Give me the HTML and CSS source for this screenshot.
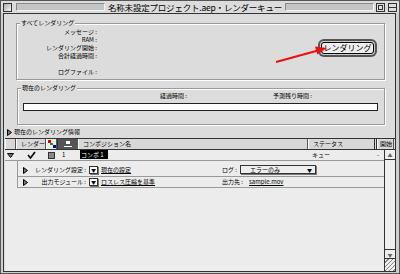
FILE: index.html
```html
<!DOCTYPE html>
<html lang="ja">

<head>
    <meta charset="UTF-8">
    <title>レンダーキュー</title>
    <link rel="stylesheet" href="styles.css">
</head>

<body>
    <div class="window">
        <!-- タイトルバー -->
        <div class="titlebar">
            <span class="wbox close-box"></span>
            <span class="stripes"></span>
            <span class="title">名称未設定プロジェクト.aep・レンダーキュー</span>
            <span class="stripes"></span>
            <span class="wbox zoom-box"></span>
            <span class="wbox collapse-box"></span>
        </div>

        <div class="frame">
            <div class="content">
                <!-- すべてレンダリング -->
                <fieldset class="group group-all">
                    <legend>すべてレンダリング</legend>
                    <div class="all-body">
                        <div class="info-labels">
                            <div>メッセージ :</div>
                            <div>RAM :</div>
                            <div>レンダリング開始 :</div>
                            <div>合計経過時間 :</div>
                            <div>&nbsp;</div>
                            <div>ログファイル :</div>
                        </div>
                        <button class="render-btn">レンダリング</button>
                    </div>
                </fieldset>

                <!-- 現在のレンダリング -->
                <fieldset class="group group-current">
                    <legend>現在のレンダリング</legend>
                    <div class="times">
                        <span class="elapsed">経過時間 :</span><span class="remain">予測残り時間 :</span>
                    </div>
                    <div class="progress"></div>
                </fieldset>

                <div class="disclosure">
                    <svg class="tri" width="5" height="7" viewBox="0 0 5 7"><polygon points="0.5,0.5 4.5,3.5 0.5,6.5" fill="#777" stroke="#000" stroke-width="1"/></svg>
                    <span>現在のレンダリング情報</span>
                </div>

                <!-- キュー -->
                <div class="queue">
                    <div class="queue-head">
                        <div class="hcell"></div>
                        <div class="hcell">レンダー</div>
                        <div class="hcell icon-cell">
                            <svg width="8" height="8" viewBox="0 0 8 8">
                                <rect x="0" y="0" width="3" height="3" fill="#d00"/>
                                <rect x="2" y="3" width="3" height="2" fill="#0a0"/>
                                <rect x="5" y="5" width="3" height="3" fill="#00c"/>
                            </svg>
                        </div>
                        <div class="hcell dark-cell">
                            <svg width="10" height="7" viewBox="0 0 10 7">
                                <rect x="3" y="0" width="4" height="3" fill="#fff"/>
                                <rect x="1" y="5" width="8" height="1" fill="#fff"/>
                            </svg>
                        </div>
                        <div class="hcell">コンポジション名</div>
                        <div class="hcell status-cell">ステータス</div>
                        <div class="hcell start-cell">開始</div>
                    </div>

                    <div class="queue-body">
                        <div class="rows">
                            <div class="item-row">
                                <div class="c-tri">
                                    <svg width="7" height="5" viewBox="0 0 7 5"><polygon points="0.5,0.5 6.5,0.5 3.5,4.5" fill="#777" stroke="#000" stroke-width="1"/></svg>
                                </div>
                                <div class="c-check">
                                    <svg width="9" height="8" viewBox="0 0 9 8"><path d="M1 4 L3.5 7 L8 1" fill="none" stroke="#000" stroke-width="1.6"/></svg>
                                </div>
                                <div class="c-label"><span class="label-sq"></span></div>
                                <div class="c-num">1</div>
                                <div class="c-name"><span class="selected">コンポ 1</span></div>
                                <div class="c-status">キュー</div>
                                <div class="c-end">-</div>
                            </div>

                            <div class="sub">
                                <div class="sub-row sub-tall">
                                    <div class="sub-left">
                                        <svg class="tri" width="5" height="7" viewBox="0 0 5 7"><polygon points="0.5,0.5 4.5,3.5 0.5,6.5" fill="#777" stroke="#000" stroke-width="1"/></svg>
                                        <span class="sub-label">レンダリング設定 :</span>
                                        <span class="pop-sq">▼</span>
                                        <span class="link">現在の設定</span>
                                    </div>
                                    <div class="sub-right">
                                        <span>ログ :</span>
                                        <span class="popup"><span>エラーのみ</span><span class="pop-arrow">▼</span></span>
                                    </div>
                                </div>
                                <div class="sub-row">
                                    <div class="sub-left">
                                        <svg class="tri" width="5" height="7" viewBox="0 0 5 7"><polygon points="0.5,0.5 4.5,3.5 0.5,6.5" fill="#777" stroke="#000" stroke-width="1"/></svg>
                                        <span class="sub-label">出力モジュール :</span>
                                        <span class="pop-sq">▼</span>
                                        <span class="link">ロスレス圧縮を基準</span>
                                    </div>
                                    <div class="sub-right">
                                        <span>出力先 :</span>
                                        <span class="link latin">sample.mov</span>
                                    </div>
                                </div>
                            </div>
                        </div>

                        <div class="scrollbar">
                            <div class="sb-btn">▲</div>
                            <div class="sb-track"></div>
                            <div class="sb-btn sb-down">▼</div>
                            <div class="grip"></div>
                        </div>
                    </div>
                </div>
            </div>
        </div>

        <!-- 注釈の矢印 -->
        <svg class="arrow" width="60" height="25" viewBox="0 0 60 25">
            <line x1="6" y1="20" x2="47" y2="8.7" stroke="#e81010" stroke-width="2"/>
            <polygon points="57,6 47.3,12.6 45,4.6" fill="#e81010"/>
        </svg>
    </div>
</body>

</html>
```

FILE: styles.css
```css
/* 全体 */
html,
body {
    margin: 0;
    height: 100%;
}

body {
    background: #999;
    font-family: "Noto Sans CJK JP", "Noto Sans", sans-serif;
    font-size: 6px;
    line-height: 8px;
    color: #000;
}

.window {
    position: relative;
    width: 400px;
    height: 274px;
    box-sizing: border-box;
    border: 1px solid #555;
    background: #cecece;
    display: flex;
    flex-direction: column;
}

/* タイトルバー */
.titlebar {
    height: 12px;
    display: flex;
    align-items: center;
    padding: 0 2px;
    background: #dcdcdc;
}

.wbox {
    width: 9px;
    height: 9px;
    box-sizing: border-box;
    border: 1px solid #333;
    background: linear-gradient(135deg, #aaa, #f4f4f4);
    position: relative;
}

.zoom-box {
    margin-left: 2px;
    background: #ddd;
}

.zoom-box::after {
    content: "";
    position: absolute;
    left: 1px;
    top: 1px;
    width: 3px;
    height: 3px;
    border: 1px solid #333;
}

.collapse-box {
    margin-left: 3px;
    background: #ddd;
}

.collapse-box::after {
    content: "";
    position: absolute;
    left: 0;
    right: 0;
    top: 2px;
    height: 1px;
    border-bottom: 1px solid #333;
}

.stripes {
    flex: 1;
    height: 8px;
    box-sizing: border-box;
    border-top: 1px solid #888;
    border-left: 1px solid #888;
    border-bottom: 1px solid #f4f4f4;
    border-right: 1px solid #f4f4f4;
    background: #c4c4c4;
}

.titlebar .stripes:nth-child(2) {
    margin-left: 4px;
}

.title {
    font-size: 8.5px;
    letter-spacing: -0.2px;
    line-height: 10px;
    margin: 0 3px;
}

/* ウィンドウ枠 */
.frame {
    flex: 1;
    display: flex;
    padding: 0 4px 1px 2px;
    min-height: 0;
}

.content {
    flex: 1;
    display: flex;
    flex-direction: column;
    border: 1px solid #333;
    background: #dcdcdc;
    min-height: 0;
}

/* グループボックス */
.group {
    border: 1px solid #999;
    box-shadow: 1px 1px 0 #fff, inset 1px 1px 0 #fff;
    padding: 0;
    min-width: 0;
}

.group legend {
    padding: 0 1px;
    margin-left: 3px;
    line-height: 8px;
    background: #dcdcdc;
}

.group-all {
    margin: 5px 10px 0 12px;
    padding: 1px 0 3px 0;
}

.all-body {
    display: flex;
    align-items: flex-start;
}

.info-labels {
    width: 80px;
    text-align: right;
}

.render-btn {
    margin: 14px 10px 0 auto;
    width: 53px;
    height: 12px;
    padding: 0;
    border: 1px solid #000;
    border-radius: 3px;
    background: #eee;
    box-shadow: 0 0 0 1px #c8c8c8, 0 0 0 3px #555;
    font-family: inherit;
    font-size: 8px;
    line-height: 10px;
    color: #000;
}

.group-current {
    margin: 4px 10px 0 13px;
    padding: 0 0 13px 0;
}

.times {
    display: flex;
}

.elapsed {
    width: 169px;
    text-align: right;
}

.remain {
    width: 125px;
    text-align: right;
}

.progress {
    margin: 3px 6px 0 5px;
    height: 8px;
    box-sizing: border-box;
    border: 1px solid #222;
    background: #fff;
}

/* 詳細の開閉 */
.disclosure {
    margin-top: 3px;
    padding-left: 3px;
    display: flex;
    align-items: center;
    gap: 2px;
    height: 8px;
}

.tri {
    display: block;
    flex: none;
}

/* レンダーキュー */
.queue {
    margin: 2px 0 0 1px;
    flex: 1;
    display: flex;
    flex-direction: column;
    min-height: 0;
}

.queue-head {
    height: 12px;
    box-sizing: border-box;
    border-top: 1px solid #333;
    border-bottom: 1px solid #333;
    display: grid;
    grid-template-columns: 11px 30px 11px 21px 230px 69px 17px;
}

.hcell {
    box-sizing: border-box;
    border-left: 1px solid #fff;
    border-right: 1px solid #555;
    background: #d8d8d8;
    padding-left: 4px;
    line-height: 10px;
    white-space: nowrap;
    overflow: hidden;
}

.start-cell {
    padding-left: 2px;
}

.icon-cell,
.dark-cell {
    padding: 0;
    display: flex;
    align-items: center;
    justify-content: center;
}

.icon-cell {
    background: #eee;
}

.dark-cell {
    background: #555;
    border-left-color: #333;
}

.status-cell {
    border-right: 3px double #333;
}

.queue-body {
    flex: 1;
    display: flex;
    background: #ececec;
    min-height: 0;
}

.rows {
    flex: 1;
}

.item-row {
    height: 11px;
    box-sizing: border-box;
    border-bottom: 1px solid #999;
    display: grid;
    grid-template-columns: 11px 30px 11px 21px 230px 69px 7px;
    align-items: center;
}

.c-tri,
.c-check,
.c-label {
    display: flex;
    justify-content: center;
    align-items: center;
}

.c-check svg,
.c-tri svg {
    display: block;
}

.label-sq {
    width: 7px;
    height: 7px;
    box-sizing: border-box;
    border: 1px solid #333;
    background: #888;
}

.c-num {
    padding-left: 5px;
}

.c-name {
    padding-left: 2px;
}

.selected {
    background: #000;
    color: #fff;
    padding: 0 4px 0 1px;
}

.c-status {
    padding-left: 4px;
}

.c-end {
    font-size: 6px;
}

/* 設定行 */
.sub {
    margin-left: 12px;
    border-left: 1px solid #999;
}

.sub-row {
    height: 11px;
    box-sizing: border-box;
    border-bottom: 1px solid #999;
    display: grid;
    grid-template-columns: 204px 1fr;
    align-items: center;
}

.sub-tall {
    height: 16px;
    align-items: end;
    padding-bottom: 2px;
}

.sub-left,
.sub-right {
    display: flex;
    align-items: center;
}

.sub-left .tri {
    margin-left: 5px;
}

.sub-label {
    width: 58px;
    text-align: right;
}

.pop-sq {
    margin-left: 3px;
    width: 9px;
    height: 8px;
    box-sizing: border-box;
    border: 1px solid #333;
    box-shadow: 1px 1px 0 #777;
    background: #fff;
    font-size: 5px;
    line-height: 6px;
    text-align: center;
}

.link {
    margin-left: 3px;
    text-decoration: underline;
}

.sub-right {
    gap: 3px;
}

.popup {
    width: 76px;
    height: 9px;
    box-sizing: border-box;
    border: 1px solid #333;
    box-shadow: 1px 1px 0 #777;
    background: #eee;
    display: flex;
    justify-content: space-between;
    align-items: center;
    padding: 0 3px 0 9px;
}

.pop-arrow {
    font-size: 5px;
}

/* スクロールバー */
.scrollbar {
    width: 10px;
    border-left: 1px solid #333;
    display: flex;
    flex-direction: column;
    background: #eee;
}

.sb-btn {
    height: 10px;
    box-sizing: border-box;
    border-bottom: 1px solid #333;
    font-size: 5px;
    line-height: 9px;
    text-align: center;
    color: #666;
}

.sb-track {
    flex: 1;
}

.sb-down {
    border-top: 1px solid #333;
}

.grip {
    height: 12px;
    background: repeating-linear-gradient(135deg, #eee 0 2px, #888 2px 3px);
}

/* 注釈 */
.arrow {
    position: absolute;
    left: 269px;
    top: 41px;
    pointer-events: none;
}
```
